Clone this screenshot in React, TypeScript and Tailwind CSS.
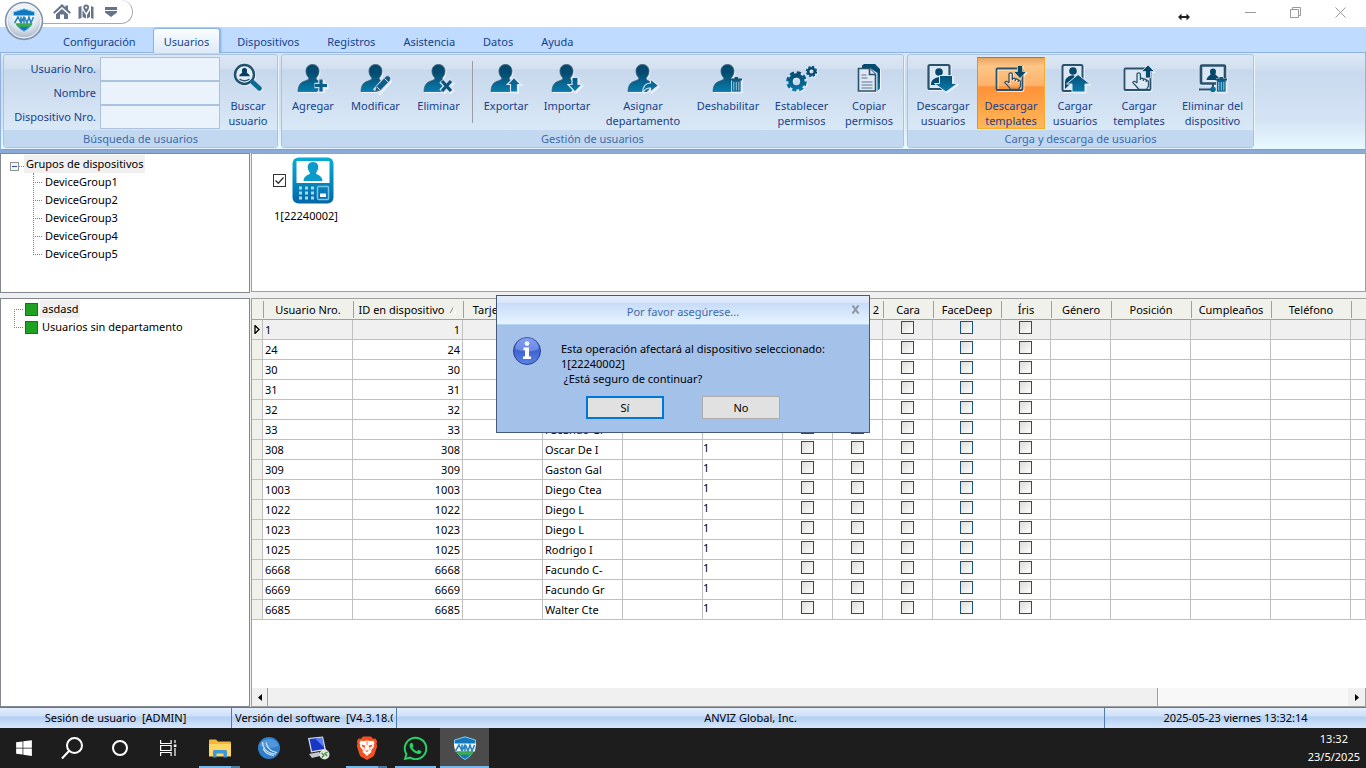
import React from "react";
import { FaWhatsapp, FaWindows } from "react-icons/fa";

const NAVY = "url(#navy)";
const EDGE = "#3f5a6e";

function Defs() {
  return (
    <svg className="absolute h-0 w-0" aria-hidden="true">
      <defs>
        <linearGradient id="navy" gradientUnits="userSpaceOnUse" x1="0" y1="2" x2="0" y2="31">
          <stop offset="0.3" stopColor="#034a70" />
          <stop offset="1" stopColor="#0a7fb0" />
        </linearGradient>
        <linearGradient id="cyan" x1="0" y1="0" x2="0" y2="1">
          <stop offset="0" stopColor="#06aed5" />
          <stop offset="1" stopColor="#0467a8" />
        </linearGradient>
        <radialGradient id="orb" cx="0.5" cy="0.3" r="0.7">
          <stop offset="0" stopColor="#ffffff" />
          <stop offset="0.6" stopColor="#dfe6ef" />
          <stop offset="1" stopColor="#9fb0c6" />
        </radialGradient>
        <linearGradient id="info" x1="0" y1="0" x2="0" y2="1">
          <stop offset="0" stopColor="#6c8cf0" />
          <stop offset="0.5" stopColor="#3f63d0" />
          <stop offset="1" stopColor="#5b83e6" />
        </linearGradient>
      </defs>
    </svg>
  );
}

// ─── Ribbon icons, all on a 32 x 32 grid ───

function Person() {
  return (
    <path
      d="M15.5 2.5C11.500 2.500 9 5.500 9 9C9 12 10.300 14.500 12 16C12 18 9 18.500 6 19.800C2.500 21.300 1.200 25 1 29.500H20L24 25V20.500C21.500 18.800 19 18 19 16C20.700 14.500 22 12 22 9C22 5.500 19.500 2.500 15.500 2.500Z"
      fill={NAVY}
      stroke={EDGE}
      strokeWidth="0.8"
    />
  );
}

function Hand() {
  return (
    <path
      d="M14 21V12.500a1.700 1.700 0 0 1 3.400 0V18M17.400 18v-1.500l1.600-.4 1.300.8V19M20.300 17.200l1.600-.2 1.300.8V20M23.200 18.300l1.600.2.7 1V24l-2 3.500h-7.500l-3-3.500-3.200-3.400c.4-1.600 2.200-1.600 4.200.4"
      fill="none"
      stroke="#2a526c"
      strokeWidth="1.3"
      strokeLinejoin="round"
    />
  );
}

function Trash() {
  return (
    <g>
      <rect x="19.5" y="16.500" width="9.500" height="13.500" fill="#0c6690" stroke="#d9e6f4" strokeWidth="0.8" />
      <path d="M18.500 17.500H30M22.500 15.800h3.500" stroke="#155374" strokeWidth="1.8" />
      <path d="M21.800 20v8.500M24.300 20v8.500M26.800 20v8.500" stroke="#9cc5dc" strokeWidth="1" />
    </g>
  );
}

function Gear({ x, y, r }: { x: number; y: number; r: number }) {
  // eight teeth: the dash pattern divides the rim's circumference evenly
  const rim = r * 0.9;
  const step = (2 * Math.PI * rim) / 8;
  return (
    <g>
      <circle cx={x} cy={y} r={r * 0.6} fill="none" stroke={NAVY} strokeWidth={r * 0.46} />
      <circle
        cx={x}
        cy={y}
        r={rim}
        fill="none"
        stroke={NAVY}
        strokeWidth={r * 0.26}
        strokeDasharray={`${step * 0.6} ${step * 0.4}`}
      />
    </g>
  );
}

const glyphs: Record<string, React.ReactNode> = {
  search: (
    <>
      <circle cx="12.500" cy="12.500" r="9.500" fill="#e3edf8" stroke="#22506d" strokeWidth="2.400" />
      <path d="M20.500 20 27.500 26.500" stroke="#0a6a98" strokeWidth="4.600" strokeLinecap="round" />
      <path d="M12.500 6c-2.400 0-3 2.200-2.300 4.300.3 1-2.800 1.500-3 4h10.600c-.2-2.500-3.300-3-3-4 .7-2.100.1-4.300-2.300-4.300Z" fill="#063f60" />
      <path d="M7.500 17q5 3.500 10 0" fill="none" stroke="#2d5a76" strokeWidth="1.500" />
    </>
  ),
  add: (
    <>
      <Person />
      <path d="M24 17v13M17.500 23.500h13" stroke="#d3e1f2" strokeWidth="5.500" />
      <path d="M24 17.500v12M18 23.500h12" stroke="#0b5f89" strokeWidth="3.200" />
    </>
  ),
  edit: (
    <>
      <Person />
      <path d="M16 30 28 16" stroke="#d3e1f2" strokeWidth="8" />
      <path d="m15.500 29.500 1.300-5 9-9.500q2-1.500 3.500 0t.2 3.500l-9.200 9.500Z" fill="#0b5f89" stroke={EDGE} strokeWidth="0.700" />
      <path d="m24.500 16.500 3.800 3.700M17 25l3 3" stroke="#d3e1f2" strokeWidth="1" />
    </>
  ),
  remove: (
    <>
      <Person />
      <path d="m18.500 18.500 10 11M28.500 18.500l-10 11" stroke="#d3e1f2" strokeWidth="6" />
      <path d="m19 19 9 10M28 19l-9 10" stroke="#0b5378" strokeWidth="3.200" />
    </>
  ),
  export: (
    <>
      <Person />
      <path d="m24 15.500 6.800 7h-3.300v7.500h-7v-7.500h-3.300Z" fill={NAVY} stroke="#dbe7f4" strokeWidth="1.200" />
    </>
  ),
  import: (
    <>
      <Person />
      <path d="M21 15.500h6v7h4l-7 7.500-7-7.500h4Z" fill={NAVY} stroke="#dbe7f4" strokeWidth="1.200" />
    </>
  ),
  assign: (
    <>
      <Person />
      <path d="M15.500 30.500C16 24.500 19 21 23.500 21v-4l8 6.500-8 6.500v-4c-3.500-.2-6 1.500-8 4.500Z" fill={NAVY} stroke="#dbe7f4" strokeWidth="1.200" />
    </>
  ),
  disable: (
    <>
      <Person />
      <Trash />
    </>
  ),
  gears: (
    <>
      <Gear x={10.5} y={19.5} r={10} />
      <Gear x={25.5} y={9.5} r={5.5} />
    </>
  ),
  copy: (
    <>
      <path d="M9 3.500 11 2h11l5 5v19.500l-2.500 2.500V11L17 6H9Z" fill={NAVY} />
      <path d="M5.500 6.500h11l6 6V29h-17Z" fill="#dfe9f5" stroke="#2a526c" strokeWidth="1.600" />
      <path d="M16.500 6.500v6h6" fill="#dfe9f5" stroke="#2a526c" strokeWidth="1.600" />
      <path d="M8.500 13h5M8.500 16h6M8.500 20h11M8.500 23h11M8.500 26h11" stroke="#5c7488" strokeWidth="1.100" />
    </>
  ),
  downUsers: (
    <>
      <rect x="1.500" y="3" width="21" height="24" rx="1.500" fill="#dce7f4" stroke="#2a526c" strokeWidth="2.200" />
      <circle cx="12" cy="10" r="3.800" fill="#06486b" />
      <path d="M4 23c0-5 3-7 8-8v8Z" fill="#06486b" />
      <path d="M12.500 13.500h13v8h5L19 30 7.500 21.500h5Z" fill={NAVY} stroke="#dbe7f4" strokeWidth="1" />
    </>
  ),
  upUsers: (
    <>
      <rect x="3.500" y="3" width="20" height="26" rx="1.500" fill="#dce7f4" stroke="#2a526c" strokeWidth="2" />
      <circle cx="14" cy="9" r="3.800" fill="#06486b" />
      <path d="M6 20c.500-4 3-6 8-7l3 3-11 11Z" fill="#06486b" />
      <path d="M19 12.500 31 22h-5v8H13v-8H7.500Z" fill={NAVY} stroke="#dbe7f4" strokeWidth="1" />
    </>
  ),
  downTemplates: (
    <>
      <rect x="1.500" y="6.500" width="26" height="21.500" rx="1" fill="none" stroke="#2a526c" strokeWidth="1.800" />
      <Hand />
      <path d="M22.500 3.500h5v6h4l-6.500 7-6.500-7h4Z" fill="#06486b" stroke="#f8cf9b" strokeWidth="0.800" />
    </>
  ),
  upTemplates: (
    <>
      <rect x="1.500" y="6.500" width="26" height="21.500" rx="1" fill="#dce7f4" stroke="#2a526c" strokeWidth="1.800" />
      <Hand />
      <path d="m25 3 6.500 6.500h-4V16h-5V9.500h-4Z" fill="#06486b" stroke="#dbe7f4" strokeWidth="0.800" />
    </>
  ),
  removeDevice: (
    <>
      <rect x="4" y="3.500" width="24" height="18" rx="1" fill="#dce7f4" stroke="#2a526c" strokeWidth="2.600" />
      <path d="M16 6.500c-3 0-3.500 3-2.500 5.500.5 1.500-3.500 2-4 6h13c-.5-4-4.500-4.500-4-6 1-2.500.5-5.500-2.500-5.500Z" fill="#06486b" />
      <path d="M16 22v5M2 27.500h16" stroke="#2a526c" strokeWidth="2.200" />
      <circle cx="16" cy="27.500" r="2.800" fill="#0a6a98" />
      <Trash />
    </>
  ),
};

function Shield({ className }: { className: string }) {
  return (
    <svg viewBox="0 0 24 24" className={className} aria-hidden="true">
      <path d="M12 .8 22.500 4c0 8.500-2.300 15-10.500 19.500C3.800 19 1.500 12.500 1.500 4Z" fill="#1178bd" stroke="#7fcdf0" strokeWidth="1" />
      <path d="M0.800 7.500h22.400l-1.400 8H2.200Z" fill="#f4fafe" />
      <path d="m2.500 15 3.500-6 3 6V8.500M9 15l3-6.500V15M12.500 9l2.500 6 2-6 2 6 2.500-6" fill="none" stroke="#2a86c0" strokeWidth="1.600" />
      <path d="M3.500 15.500h17l-2 3.200h-13Z" fill="#3daa4c" />
    </svg>
  );
}

function RibbonButton({
  icon,
  lines,
  width,
  active = false,
}: {
  icon: string;
  lines: string[];
  width: string;
  active?: boolean;
}) {
  const look = active
    ? "border-[#f5ae29] border-t-[#a5783f] border-l-[#c9954f] bg-[linear-gradient(#e9a55e_0%,#fdc587_12%,#fdb269_40%,#ff9138_41%,#ffb85a_100%)]"
    : "border-transparent";
  return (
    <button className={`flex h-[72px] shrink-0 flex-col items-center border pt-1 leading-[15px] ${width} ${look}`}>
      <svg
        viewBox="0 0 32 32"
        className="mb-1 h-8 w-8 shrink-0 drop-shadow-[1px_1px_0_rgba(255,255,255,0.700)]"
        aria-hidden="true"
      >
        {glyphs[icon]}
      </svg>
      {lines.map((line) => (
        <span key={line} className="whitespace-nowrap">
          {line}
        </span>
      ))}
    </button>
  );
}

function RibbonGroup({ title, children }: { title: string; children: React.ReactNode }) {
  return (
    <section
      aria-label={title}
      className="flex flex-col rounded-[3px] border border-[#a9c3e0] bg-[linear-gradient(#dde7f4_0%,#d3e0f0_15%,#c7d8ed_16%,#d9e8f6_80%)] shadow-[1px_1px_0_#e9f4fe]"
    >
      <div className="flex flex-1 items-start px-px pt-[2px]">{children}</div>
      <div className="h-[17px] bg-[#c1d8f0] text-center leading-[17px] text-[#3e6aaa]">{title}</div>
    </section>
  );
}

const tabs = ["Configuración", "Usuarios", "Dispositivos", "Registros", "Asistencia", "Datos", "Ayuda"];

function TitleBar() {
  return (
    <header className="relative flex h-[27px] shrink-0 items-start justify-between bg-white">
      <div className="ml-9 flex h-6 items-center gap-[5px] rounded-r-full border border-t-0 border-l-0 border-[#a9a9a9] pr-3 pl-4">
        <button aria-label="Inicio">
          <svg viewBox="0 0 20 18" className="h-[18px] w-5" fill="#64748b">
            <path d="M10 1 1 9.500l1.500 1.200L10 4l7.500 6.700L19 9.500l-3-3V2.500h-2.500v1.700Z" />
            <path d="M4 11.200 10 6l6 5.200V16h-4v-4.500H8V16H4Z" />
          </svg>
        </button>
        <button aria-label="Mapa">
          <svg viewBox="0 0 18 18" className="h-[18px] w-[18px]" fill="#64748b">
            <path d="M1.500 4 4.500 3v12l-3 1ZM5.500 7 9 12v3.500L5.500 14ZM16.500 4 14 3v12l2.500 1ZM13 7l-3 5v3.500l3-1.500Z" />
            <path d="M9.200 1.500A2.800 2.800 0 0 1 12 4.500c0 2-2.800 5.500-2.800 5.500S6.300 6.500 6.300 4.500a2.900 2.900 0 0 1 2.900-3Zm0 2a1.100 1.100 0 1 0 0 2.200 1.100 1.100 0 0 0 0-2.200Z" fillRule="evenodd" />
          </svg>
        </button>
        <button aria-label="Personalizar">
          <svg viewBox="0 0 18 18" className="ml-[2px] h-[18px] w-[18px]" fill="#64748b">
            <path d="M3 4h12v3H3ZM3 8h12v1.500L9 14 3 9.500Z" />
          </svg>
        </button>
      </div>
      <svg viewBox="0 0 12 8" className="absolute top-[13px] right-[176px] h-2 w-3" aria-hidden="true">
        <path d="M0 4 3.500.5V3h5V.5L12 4 8.500 7.500V5h-5v2.500Z" fill="#222" />
      </svg>
      <div className="flex pr-[3px] text-[#999]">
        <button aria-label="Minimizar" className="flex h-6 w-[45px] items-center justify-center">
          <svg viewBox="0 0 11 11" className="h-[11px] w-[11px]" stroke="currentColor">
            <path d="M0 5.500h11" />
          </svg>
        </button>
        <button aria-label="Restaurar" className="flex h-6 w-[45px] items-center justify-center">
          <svg viewBox="0 0 11 11" className="h-[11px] w-[11px]" fill="none" stroke="currentColor">
            <path d="M.5 2.500h8v8h-8ZM2.500 2.500v-2h8v8h-2" />
          </svg>
        </button>
        <button aria-label="Cerrar" className="flex h-6 w-[45px] items-center justify-center">
          <svg viewBox="0 0 11 11" className="h-[11px] w-[11px]" stroke="currentColor">
            <path d="m.5.5 10 10M10.500.5l-10 10" />
          </svg>
        </button>
      </div>
      <button aria-label="Menú de la aplicación" className="absolute top-0 left-1 z-10">
        <svg viewBox="0 0 40 42" className="h-[42px] w-10">
          <circle cx="20" cy="21" r="18.500" fill="url(#orb)" stroke="#8493a8" strokeWidth="1.500" />
          <circle cx="20" cy="21" r="16.800" fill="none" stroke="#f4f8fc" strokeWidth="1" />
        </svg>
        <Shield className="absolute top-2 left-2 h-6 w-6" />
      </button>
    </header>
  );
}

const searchFields = [
  { id: "usuario-nro", label: "Usuario Nro." },
  { id: "nombre", label: "Nombre" },
  { id: "dispositivo-nro", label: "Dispositivo Nro." },
];

function Ribbon() {
  return (
    <div className="shrink-0 bg-[#bfdbff] text-[#15428b]">
      <nav className="flex h-[25px] items-end gap-[6px] pl-[52px]">
        {tabs.map((tab) => (
          <button
            key={tab}
            className={
              tab === "Usuarios"
                ? "relative z-10 -mb-px h-[25px] rounded-t-[3px] border border-b-0 border-[#8db2e3] bg-[linear-gradient(#fbfdff,#e9f2fc_60%,#dde9f7)] px-[10px] pt-[2px] shadow-[1px_0_2px_#7fa8dc]"
                : "h-[22px] px-[11px] pt-[2px]"
            }
          >
            {tab}
          </button>
        ))}
      </nav>
      <div className="flex h-[101px] items-start gap-[3px] overflow-hidden border-b-[3px] border-[#8aaad8] bg-[linear-gradient(#dfe9f5_0%,#c9daee_22%,#d4e4f5_70%,#e9fbff_100%)] px-[3px] pt-[2px] shadow-[inset_0_1px_0_#8db2e3,inset_1px_0_0_#8db2e3,inset_-1px_0_0_#8db2e3,inset_0_-1px_0_#7f9fbf] [&>section]:h-[94px]">
        <RibbonGroup title="Búsqueda de usuarios">
          <div className="grid grid-cols-[91px_120px] items-center gap-x-1">
            {searchFields.map((field) => (
              <React.Fragment key={field.id}>
                <label htmlFor={field.id} className="text-right whitespace-nowrap">
                  {field.label}
                </label>
                <input id={field.id} className="h-6 w-full border border-[#abc1de] bg-[#eaf2fb] px-1 outline-none" />
              </React.Fragment>
            ))}
          </div>
          <RibbonButton icon="search" lines={["Buscar", "usuario"]} width="w-[56px]" />
        </RibbonGroup>
        <RibbonGroup title="Gestión de usuarios">
          <RibbonButton icon="add" lines={["Agregar"]} width="w-[60px]" />
          <RibbonButton icon="edit" lines={["Modificar"]} width="w-[65px]" />
          <RibbonButton icon="remove" lines={["Eliminar"]} width="w-[61px]" />
          <div className="mt-1 mr-[2px] ml-[3px] h-[62px] w-px shrink-0 bg-[#9a9da3]" />
          <RibbonButton icon="export" lines={["Exportar"]} width="w-[62px]" />
          <RibbonButton icon="import" lines={["Importar"]} width="w-[60px]" />
          <RibbonButton icon="assign" lines={["Asignar", "departamento"]} width="w-[92px]" />
          <RibbonButton icon="disable" lines={["Deshabilitar"]} width="w-[78px]" />
          <RibbonButton icon="gears" lines={["Establecer", "permisos"]} width="w-[69px]" />
          <RibbonButton icon="copy" lines={["Copiar", "permisos"]} width="w-[66px]" />
        </RibbonGroup>
        <RibbonGroup title="Carga y descarga de usuarios">
          <RibbonButton icon="downUsers" lines={["Descargar", "usuarios"]} width="w-[68px]" />
          <RibbonButton icon="downTemplates" lines={["Descargar", "templates"]} width="w-[68px]" active />
          <RibbonButton icon="upUsers" lines={["Cargar", "usuarios"]} width="w-[60px]" />
          <RibbonButton icon="upTemplates" lines={["Cargar", "templates"]} width="w-[68px]" />
          <RibbonButton icon="removeDevice" lines={["Eliminar del", "dispositivo"]} width="w-[79px]" />
        </RibbonGroup>
      </div>
    </div>
  );
}

const deviceGroups = ["DeviceGroup1", "DeviceGroup2", "DeviceGroup3", "DeviceGroup4", "DeviceGroup5"];
const departments = ["asdasd", "Usuarios sin departamento"];

function DeviceTree() {
  return (
    <div className="h-[140px] border border-[#828790] bg-white pt-px leading-[18px]">
      <div className="flex items-center pl-2">
        <button aria-label="Contraer grupos" className="mt-1 ml-px flex h-[9px] w-[9px] items-center justify-center border border-[#919191] bg-[#f4f4f4]">
          <span className="h-px w-[5px] bg-[#2b4fa0]" />
        </button>
        <span className="mt-1 w-[5px] border-b border-dotted border-[#808080]" />
        <span className="bg-[#f0f0f0] px-[2px]">Grupos de dispositivos</span>
      </div>
      <ul className="relative before:absolute before:top-0 before:bottom-[8px] before:left-8 before:border-l before:border-dotted before:border-[#808080]">
        {deviceGroups.map((group) => (
          <li key={group} className="flex items-center pl-8">
            <span className="mr-[3px] w-[9px] border-b border-dotted border-[#808080]" />
            {group}
          </li>
        ))}
      </ul>
    </div>
  );
}

function DepartmentTree() {
  return (
    <div className="flex-1 border border-[#828790] bg-white leading-[18px]">
      <ul className="relative pt-px before:absolute before:top-[10px] before:bottom-[8px] before:left-[13px] before:border-l before:border-dotted before:border-[#808080]">
        {departments.map((name, i) => (
          <li key={name} className="flex items-center pl-[13px]">
            <span className="mr-[2px] w-[9px] border-b border-dotted border-[#808080]" />
            <span className="mr-[2px] h-[13px] w-[13px] border border-[#1f5a86] bg-[#21a121]" />
            <span className={i === 0 ? "bg-[#f0f0f0] px-[2px]" : "px-[2px]"}>{name}</span>
          </li>
        ))}
      </ul>
    </div>
  );
}

function DevicePanel() {
  return (
    <div className="h-[139px] border border-[#a0a0a0] bg-white pt-[3px] pl-5">
      <label className="flex w-[68px] flex-col items-center">
        <span className="flex items-center gap-[6px] self-start pl-px">
          <span className="relative h-[13px] w-[13px]">
            <input type="checkbox" defaultChecked className="block h-[13px] w-[13px] appearance-none border border-[#333] bg-white" />
            <svg viewBox="0 0 13 13" className="pointer-events-none absolute inset-0 h-[13px] w-[13px]" aria-hidden="true">
              <path d="m2.500 6.500 2.800 2.800 5.200-5.800" fill="none" stroke="#333" strokeWidth="1.300" />
            </svg>
          </span>
          <svg viewBox="0 0 42 47" className="h-[47px] w-[42px]" aria-hidden="true">
            <rect x="0.500" y="0.500" width="41" height="46" rx="6" fill="url(#cyan)" />
            <rect x="4.500" y="4" width="33" height="22" fill="#fff" />
            <path d="M21 5c-4.200 0-5.700 3-5.200 6 .3 2.500 1.700 4 2.200 5 0 2-6 1.500-6.500 8h19c-.5-6.500-6.500-6-6.500-8 .5-1 1.900-2.500 2.200-5 .5-3-1-6-5.200-6Z" fill="#0a9bcb" />
            <path d="M7 31h15M7 36h15M7 41h15" stroke="#a9d9ee" strokeWidth="3" strokeDasharray="3 3" />
            <rect x="25.500" y="29.500" width="11" height="13" rx="1" fill="none" stroke="#7cc4e4" strokeWidth="1.500" />
            <path d="M28 36.500h6v3.500h-6Z" fill="#fff" />
          </svg>
        </span>
        <span className="mt-1 leading-[15px]">1[22240002]</span>
      </label>
    </div>
  );
}

interface UserRow {
  id: string;
  name: string;
  group: string;
}

const users: UserRow[] = [
  { id: "1", name: "", group: "" },
  { id: "24", name: "", group: "" },
  { id: "30", name: "", group: "" },
  { id: "31", name: "", group: "" },
  { id: "32", name: "", group: "" },
  { id: "33", name: "Facundo Gr", group: "" },
  { id: "308", name: "Oscar De I", group: "1" },
  { id: "309", name: "Gaston Gal", group: "1" },
  { id: "1003", name: "Diego Ctea", group: "1" },
  { id: "1022", name: "Diego L", group: "1" },
  { id: "1023", name: "Diego L", group: "1" },
  { id: "1025", name: "Rodrigo I", group: "1" },
  { id: "6668", name: "Facundo C-", group: "1" },
  { id: "6669", name: "Facundo Gr", group: "1" },
  { id: "6685", name: "Walter Cte", group: "1" },
];

const columns = [
  { key: "user", title: "Usuario Nro.", width: "w-[90px]" },
  { key: "device", title: "ID en dispositivo", width: "w-[110px]" },
  { key: "card", title: "Tarjeta Nro.", width: "w-[80px]" },
  { key: "name", title: "", width: "w-[80px]" },
  { key: "pin", title: "", width: "w-[80px]" },
  { key: "group", title: "", width: "w-[80px]" },
  { key: "finger1", title: "", width: "w-[50px]" },
  { key: "finger2", title: "Huella 2", width: "w-[50px]" },
  { key: "face", title: "Cara", width: "w-[50px]" },
  { key: "facedeep", title: "FaceDeep", width: "w-[68px]" },
  { key: "iris", title: "Íris", width: "w-[50px]" },
  { key: "gender", title: "Género", width: "w-[60px]" },
  { key: "position", title: "Posición", width: "w-[80px]" },
  { key: "birthday", title: "Cumpleaños", width: "w-[80px]" },
  { key: "phone", title: "Teléfono", width: "w-[80px]" },
];

const checkColumns = ["Huella 1", "Huella 2", "Cara", "FaceDeep", "Íris"];

function UserTable() {
  return (
    <div className="flex min-h-0 flex-1 flex-col border-t border-l border-[#a0a0a0] bg-white">
      <div className="min-h-0 flex-1 overflow-hidden">
        <table className="w-full table-fixed border-separate border-spacing-0 [&_td]:h-5 [&_td]:border-r [&_td]:border-b [&_td]:border-[#c0c0c0]">
          <thead>
            <tr className="bg-[#f1f1ec]">
              <th className="w-[11px] border-b border-[#a0a0a0] p-0" />
              {columns.map((col) => (
                <th
                  key={col.key}
                  className={`h-[21px] border-b border-[#a0a0a0] bg-[linear-gradient(#a0a0a0,#a0a0a0)] bg-[size:1px_17px] bg-[position:left_2px] bg-no-repeat p-0 pt-[2px] text-center font-normal whitespace-nowrap ${col.width}`}
                >
                  {col.title}
                  {col.key === "device" && (
                    <svg viewBox="0 0 8 7" className="ml-[5px] inline h-[7px] w-2" aria-hidden="true">
                      <path d="M1 6.500 4 .5" stroke="#909090" />
                      <path d="m4 .5 3 6H1" fill="none" stroke="#fff" />
                    </svg>
                  )}
                </th>
              ))}
              <th className="border-b border-[#a0a0a0] bg-[linear-gradient(#a0a0a0,#a0a0a0)] bg-[size:1px_17px] bg-[position:left_2px] bg-no-repeat p-0" />
            </tr>
          </thead>
          <tbody>
            {users.map((user, i) => (
              <tr key={user.id} className={i === 0 ? "bg-[#f0f0f0]" : "bg-white"}>
                <td className="bg-[#f1f1ec]">
                  {i === 0 && (
                    <svg viewBox="0 0 6 9" className="mx-auto block h-[9px] w-[6px]" aria-hidden="true">
                      <path d="m1 .5 4 4-4 4Z" fill="none" stroke="#000" strokeWidth="1.300" />
                    </svg>
                  )}
                </td>
                <td className="pl-[2px] leading-[19px]">{user.id}</td>
                <td className="pr-[2px] text-right leading-[19px]">{user.id}</td>
                <td />
                <td className="pl-[2px] leading-[19px]">{user.name}</td>
                <td />
                <td className="align-top leading-[15px]">{user.group}</td>
                {checkColumns.map((name) => (
                  <td key={name} className="align-top">
                    <input
                      type="checkbox"
                      aria-label={`${name} ${user.id}`}
                      className="mx-auto mt-px block h-[13px] w-[13px] appearance-none border border-[#1c5180] bg-[linear-gradient(135deg,#dcdcd7,#fff)]"
                    />
                  </td>
                ))}
                <td />
                <td />
                <td />
                <td />
                <td />
              </tr>
            ))}
          </tbody>
        </table>
      </div>
      <div className="flex h-[19px] items-stretch border-b border-[#a0a0a0]">
        <button aria-label="Desplazar a la izquierda" className="flex w-4 items-center justify-center border-r border-[#a0a0a0] bg-[#f0f0f0]">
          <svg viewBox="0 0 4 7" className="h-[7px] w-1">
            <path d="M4 0v7L0 3.500Z" />
          </svg>
        </button>
        <div className="flex flex-1 bg-[#f8f8f8]">
          <div className="flex-[89] border-r border-[#a0a0a0] bg-[#f0f0f0]" />
          <div className="flex-[19]" />
        </div>
        <button aria-label="Desplazar a la derecha" className="flex w-[18px] items-center justify-center border-r border-[#a0a0a0] bg-[#f0f0f0]">
          <svg viewBox="0 0 4 7" className="h-[7px] w-1">
            <path d="M0 0v7l4-3.500Z" />
          </svg>
        </button>
      </div>
    </div>
  );
}

function ConfirmDialog() {
  return (
    <div className="pointer-events-none fixed inset-0 bottom-10 z-20 flex items-center justify-center">
      <div
        role="dialog"
        aria-labelledby="dialog-title"
        className="pointer-events-auto h-[138px] w-[374px] border border-[#47597a] bg-[#a4c1ea]"
      >
        <div className="relative flex h-[29px] items-center justify-center border-b border-[#b6d4f8] bg-[linear-gradient(#e3edfb_0%,#d9e6f9_24%,#c7dcf8_25%,#e6f4ff_100%)] pt-1 text-[#3e6aaa]">
          <h2 id="dialog-title">Por favor asegúrese...</h2>
          <button aria-label="Cerrar diálogo" className="absolute top-[9px] right-[9px]">
            <svg viewBox="0 0 9 9" className="h-[9px] w-[9px]" stroke="#8f959e" strokeWidth="2">
              <path d="m1.500.5 6 8M7.500.5l-6 8" />
            </svg>
          </button>
        </div>
        <div className="flex gap-[19px] pt-[11px] pl-[15px]">
          <svg viewBox="0 0 30 30" className="h-[30px] w-[30px]" aria-hidden="true">
            <circle cx="15" cy="15" r="13.500" fill="url(#info)" stroke="#2b3f86" strokeWidth="1" />
            <path d="M3.500 13a11.500 11.500 0 0 1 23 0q-11 5-23 0Z" fill="#9db6fa" opacity="0.450" />
            <circle cx="15" cy="7.500" r="2.300" fill="#fff" />
            <path d="M11.500 11.500h5.500v9h2V23h-8v-2.500h2V14h-1.500Z" fill="#fff" />
          </svg>
          <p className="pt-[5px] leading-[15px] whitespace-pre">
            {"Esta operación afectará al dispositivo seleccionado:\n1[22240002]\n ¿Está seguro de continuar?"}
          </p>
        </div>
        <div className="mt-[10px] flex gap-[38px] pl-[89px]">
          <button className="h-[23px] w-[78px] border-2 border-[#0078d7] bg-[#e1e1e1] leading-[19px]">Sí</button>
          <button className="h-[23px] w-[78px] border border-[#adadad] bg-[#e1e1e1] leading-[21px]">No</button>
        </div>
      </div>
    </div>
  );
}

function StatusBar() {
  return (
    <footer className="flex h-[21px] shrink-0 border-t border-[#4f7cb4] bg-[linear-gradient(#e3eefd_0%,#cfe0f8_40%,#b3cff4_45%,#d6e6fb_100%)] text-center leading-5 whitespace-pre">
      <span className="w-[232px] border-r border-[#4f7cb4]">{"Sesión de usuario  [ADMIN]"}</span>
      <span className="w-[165px] border-r border-[#4f7cb4] px-[3px]">
        <span className="block overflow-hidden text-left">{"Versión del software  [V4.3.18.0]"}</span>
      </span>
      <span className="flex-1">ANVIZ Global, Inc.</span>
      <span className="w-[262px] border-l border-[#4f7cb4]">2025-05-23 viernes 13:32:14</span>
    </footer>
  );
}

function TaskButton({ label, mark = "", children }: { label: string; mark?: string; children: React.ReactNode }) {
  return (
    <button
      aria-label={label}
      className={`relative flex h-full w-[49px] shrink-0 items-center justify-center ${mark === "active" ? "bg-[#4b4b4b]" : ""}`}
    >
      {children}
      {mark !== "" && (
        <span className={`absolute bottom-0 flex h-[2px] bg-[#76b9ed] ${mark === "active" ? "inset-x-0" : "inset-x-1"}`}>
          {mark === "multi" && <span className="ml-auto w-[9px] bg-[#4f7ba0]" />}
        </span>
      )}
    </button>
  );
}

function Taskbar() {
  return (
    <div className="flex h-10 shrink-0 items-stretch bg-[#1d1d1d] text-white">
      <button aria-label="Inicio de Windows" className="flex w-12 items-center justify-center">
        <FaWindows className="h-[18px] w-[18px]" />
      </button>
      <button aria-label="Buscar" className="flex w-12 items-center justify-center">
        <svg viewBox="0 0 24 24" className="h-6 w-6" fill="none" stroke="#fff" strokeWidth="2">
          <circle cx="14.500" cy="9.500" r="7.500" />
          <path d="M9 15 2 22.500" />
        </svg>
      </button>
      <button aria-label="Cortana" className="flex w-12 items-center justify-center">
        <span className="h-4 w-4 rounded-full border-2 border-white" />
      </button>
      <button aria-label="Vista de tareas" className="mr-[3px] flex w-12 items-center justify-center">
        <svg viewBox="0 0 17 16" className="h-4 w-[17px]" fill="none" stroke="#fff" strokeWidth="1.200">
          <path d="M.600 0v3.500h10.500V0M.600 16v-3.500h10.500V16M.600 5.500h10.500v5H.600ZM15 0v3M15 8v8" />
          <path d="M13.800 4.500h2.600v2.500h-2.600Z" fill="#fff" stroke="none" />
        </svg>
      </button>
      <TaskButton label="Explorador de archivos" mark="multi">
        <svg viewBox="0 0 22 19" className="h-[19px] w-[22px]">
          <path d="M0 1.500Q0 .5 1 .5h6l2 2h12q1 0 1 1v12H0Z" fill="#f3b63a" />
          <path d="M0 5h22v12.500H0Z" fill="#fcd667" />
          <path d="M4 18.500v-6q0-1.500 1.500-1.500h11q1.500 0 1.500 1.500v6h-3.500v-4h-7v4Z" fill="#3d97d8" />
        </svg>
      </TaskButton>
      <TaskButton label="Soporte remoto">
        <svg viewBox="0 0 22 22" className="h-[22px] w-[22px]" fill="none">
          <circle cx="11" cy="11" r="11" fill="#2f7fcc" />
          <path d="M1.500 9a10 10 0 0 1 19 0Q11 13 1.500 9Z" fill="#71b0ea" opacity=".5" />
          <path d="M4.500 5c.5 6.500 5 11.500 13.500 12M8 5.500c1 5 4.500 9 11 10M5 11.500c2 4 6 6.500 11 7" stroke="#e6f2fd" strokeWidth="1.100" />
        </svg>
      </TaskButton>
      <TaskButton label="Escritorio remoto">
        <svg viewBox="0 0 24 24" className="h-6 w-6">
          <path d="m2 2 15-1.500 3 13.500-15 2.500Z" fill="#d8dce4" />
          <path d="m3.500 3 12.500-1.200 2.400 11.200-12.400 2Z" fill="#1a36c4" />
          <path d="m9 2.500 7-.7 2 9.500Z" fill="#5a7cf0" />
          <path d="m3 18 10-2 3 3.500-10 2.500Z" fill="#c3c8d1" />
          <circle cx="18.500" cy="18.500" r="5" fill="#dfe5dc" />
          <path d="m15.500 17 2.500 2-2 2.500M21.500 16l-2.500 1.500 2 2.500" fill="none" stroke="#3f8d3b" strokeWidth="1.300" />
        </svg>
      </TaskButton>
      <TaskButton label="Brave" mark="multi">
        <svg viewBox="0 0 22 24" className="h-6 w-[22px]">
          <path d="M7 .5h8l2 2.300 2.500-.3 1.700 3-.7 2 .7 2.500-2.700 8.500q-.5 1.500-2 2.500L11 24l-5.500-3q-1.500-1-2-2.500L.8 10l.7-2.500-.7-2 1.700-3 2.500.3Z" fill="#f4511e" />
          <path d="m11 4.500 3 .5 3.500-.3 1 2.300-.8 2 .3 1.500-3 4 .5 1.500-2 1.500-2.500 2.500L8.500 17.500l-2-1.500.5-1.500-3-4 .3-1.500-.8-2 1-2.300L8 5Z" fill="#fff" />
          <path d="m5.500 8.500 4 1.200-.7 1.800L6.500 11ZM16.500 8.500l-4 1.200.7 1.800 2.300-.5ZM9 14.500h4l-2 1.600Z" fill="#f4511e" />
          <path d="M11 5v4M7.500 13.500l1.500-1M14.500 13.500l-1.500-1" stroke="#f4511e" strokeWidth="0.800" />
        </svg>
      </TaskButton>
      <TaskButton label="WhatsApp" mark="open">
        <FaWhatsapp className="h-[27px] w-[27px] text-[#25d366]" />
      </TaskButton>
      <TaskButton label="Anviz" mark="active">
        <Shield className="h-6 w-6" />
      </TaskButton>
      <div className="ml-auto flex flex-col justify-center pr-[6px] text-center leading-[18px]">
        <span>13:32</span>
        <span>23/5/2025</span>
      </div>
    </div>
  );
}

export default function App() {
  return (
    <div className="flex h-screen flex-col overflow-hidden bg-[#f0f0f0] font-['Noto_Sans','Open_Sans',sans-serif] text-[11px] text-black">
      <Defs />
      <TitleBar />
      <Ribbon />
      <main className="flex min-h-0 flex-1 gap-px">
        <aside className="flex w-[250px] shrink-0 flex-col gap-[5px]">
          <DeviceTree />
          <DepartmentTree />
        </aside>
        <div className="flex min-w-0 flex-1 flex-col gap-[6px]">
          <DevicePanel />
          <UserTable />
        </div>
      </main>
      <StatusBar />
      <Taskbar />
      <ConfirmDialog />
    </div>
  );
}
